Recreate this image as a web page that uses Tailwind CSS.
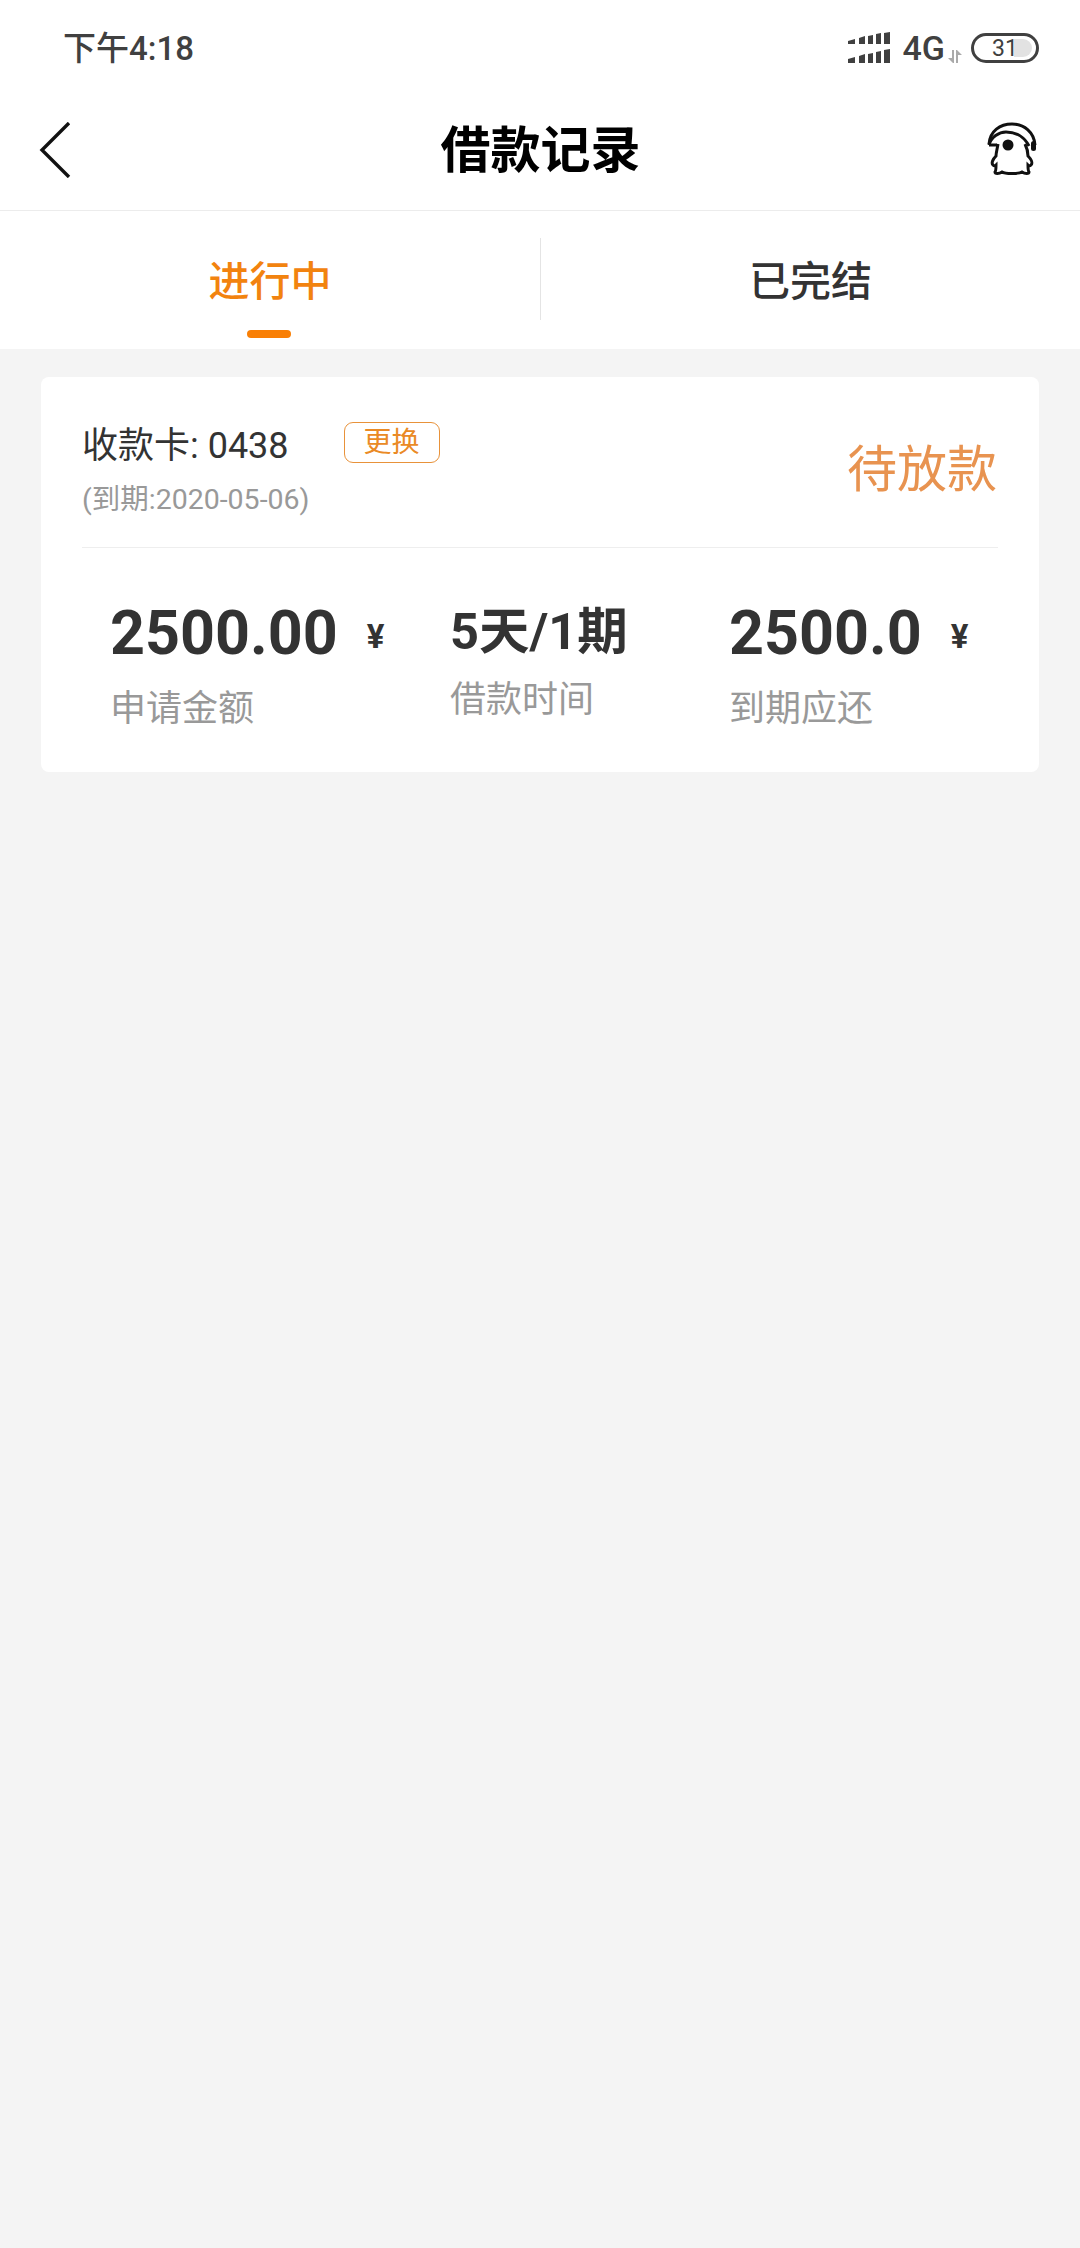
<!DOCTYPE html>
<html lang="zh">
<head>
<meta charset="utf-8">
<title>借款记录</title>
<script src="https://cdn.jsdelivr.net/npm/@tailwindcss/browser@4"></script>
</head>
<body class="bg-[#f4f4f4] font-['Roboto','Noto_Sans_CJK_SC',sans-serif]">
<div class="w-[1080px] h-[2248px] overflow-hidden flex flex-col">

  <!-- status bar -->
  <div class="h-[66px] bg-white flex items-center justify-between pl-[63px] pr-[41px] pt-[30px] text-[#404040]">
    <span class="text-[33px] leading-none font-medium">下午4:18</span>
    <div class="flex items-center">
      <svg class="w-[42px] h-[32px]" viewBox="0 0 42 32" fill="#404040">
        <path d="M0 9l7-2v5H0zM11 6l6-2v8h-6zM20 4l5-1v9h-5zM28 2l5-1v11h-5zM36 1l6-1v12h-6z"/>
        <path d="M0 27l7-2v6H0zM11 24l6-2v9h-6zM20 22l5-1v10h-5zM28 20l5-1v12h-5zM36 18l6-1v14h-6z"/>
      </svg>
      <span class="ml-[13px] text-[34px] leading-none font-medium">4G</span>
      <svg class="ml-[3px] mt-[16px] w-[14px] h-[13px]" viewBox="0 0 14 13" fill="#aaa">
        <path d="M4 0h2v13H5L0 8h4zM8 0h1l5 5h-4v8H8z"/>
      </svg>
      <div class="relative ml-[9px] w-[68px] h-[30px] rounded-full border-[3px] border-[#404040] flex items-center justify-center overflow-hidden">
        <div class="absolute right-[4px] top-[3px] bottom-[3px] w-[18px] bg-[#e2e2e2] rounded-r-full"></div>
        <span class="relative text-[23px] leading-none text-[#404040]">31</span>
      </div>
    </div>
  </div>

  <!-- nav bar -->
  <div class="h-[145px] bg-white border-b border-[#ececec] flex items-center pl-[39px] pr-[38px] pt-[26px]">
    <div class="flex-1 flex">
      <svg class="w-[32px] h-[56px] mb-[2px]" viewBox="0 0 32 56" fill="none" stroke="#111" stroke-width="3.4">
        <path d="M30 1L3 28l27 27"/>
      </svg>
    </div>
    <span class="text-[50px] leading-none font-bold text-black">借款记录</span>
    <div class="flex-1 flex justify-end">
      <svg class="w-[50px] h-[54px] mr-[5px] mb-[4px]" viewBox="0 0 50 54" fill="none" stroke="#111" stroke-width="3">
        <path d="M2 22C3 9 13 2 25 2s22 8 23 21"/>
        <path d="M2 23c2-8 10-13 17-13 11 0 19 6 23 14"/>
        <path d="M2 23l8 0"/>
        <rect x="44" y="19" width="5" height="10" rx="2.5" fill="#111" stroke="none"/>
        <circle cx="21" cy="23" r="5.5" fill="#111" stroke="none"/>
        <path d="M11 22c-1 6-2 9-2 12-3 3-5 7-3 9 1 1 2 1 3 0 0 4 0 6-1 7 0 2 4 2 7 0 3 2 17 2 20 0 3 2 7 2 7 0-1-1-1-3-1-7 1 1 2 1 3 0 2-2 0-6-3-9 0-4-1-8-3-12"/>
      </svg>
    </div>
  </div>

  <!-- tabs -->
  <div class="h-[138px] bg-white flex">
    <div class="w-[540px] relative flex items-center justify-center pt-[4px]">
      <span class="text-[41px] leading-none font-medium text-[#f2830f]">进行中</span>
      <div class="absolute bottom-[11px] left-[247px] w-[44px] h-[8px] rounded-full bg-[#f97f05]"></div>
    </div>
    <div class="w-[1px] h-[82px] mt-[27px] bg-[#e4e4e4]"></div>
    <div class="flex-1 flex items-center justify-center pt-[4px]">
      <span class="text-[41px] leading-none font-medium text-[#333]">已完结</span>
    </div>
  </div>

  <!-- card -->
  <div class="mt-[28px] ml-[41px] w-[998px] h-[395px] bg-white rounded-[8px] px-[41px]">
    <div class="h-[171px] border-b border-[#eeeeee] flex justify-between">
      <div class="pt-[49px]">
        <div class="flex items-start">
          <span class="text-[36px] leading-[40px] text-[#333]">收款卡: 0438</span>
          <span class="ml-[55px] mt-[-4px] w-[96px] h-[41px] rounded-[9px] border border-[#e8923a] flex items-center justify-center text-[28px] leading-none text-[#ea8a25]">更换</span>
        </div>
        <div class="mt-[18px] text-[28.5px] leading-[32px] text-[#999]">(到期:2020-05-06)</div>
      </div>
      <span class="mt-[68px] mr-[1px] text-[50px] leading-none text-[#e89350]">待放款</span>
    </div>
    <div class="flex pl-[28px]">
      <div class="w-[340px] pt-[54px]">
        <div class="flex items-center h-[62px]">
          <span class="text-[61px] leading-none font-bold text-[#333]">2500.00</span>
          <span class="ml-[29px] mt-[6px] text-[33px] leading-none font-bold text-[#333]">¥</span>
        </div>
        <div class="mt-[24px] text-[36px] leading-[42px] text-[#999]">申请金额</div>
      </div>
      <div class="w-[279px] pt-[54px]">
        <div class="text-[50.5px] leading-[60px] font-bold text-[#333]">5天/1期</div>
        <div class="mt-[17px] text-[36px] leading-[42px] text-[#999]">借款时间</div>
      </div>
      <div class="pt-[54px]">
        <div class="flex items-center h-[62px]">
          <span class="text-[61px] leading-none font-bold text-[#333]">2500.0</span>
          <span class="ml-[29px] mt-[6px] text-[33px] leading-none font-bold text-[#333]">¥</span>
        </div>
        <div class="mt-[24px] text-[36px] leading-[42px] text-[#999]">到期应还</div>
      </div>
    </div>
  </div>
</div>
</body>
</html>
